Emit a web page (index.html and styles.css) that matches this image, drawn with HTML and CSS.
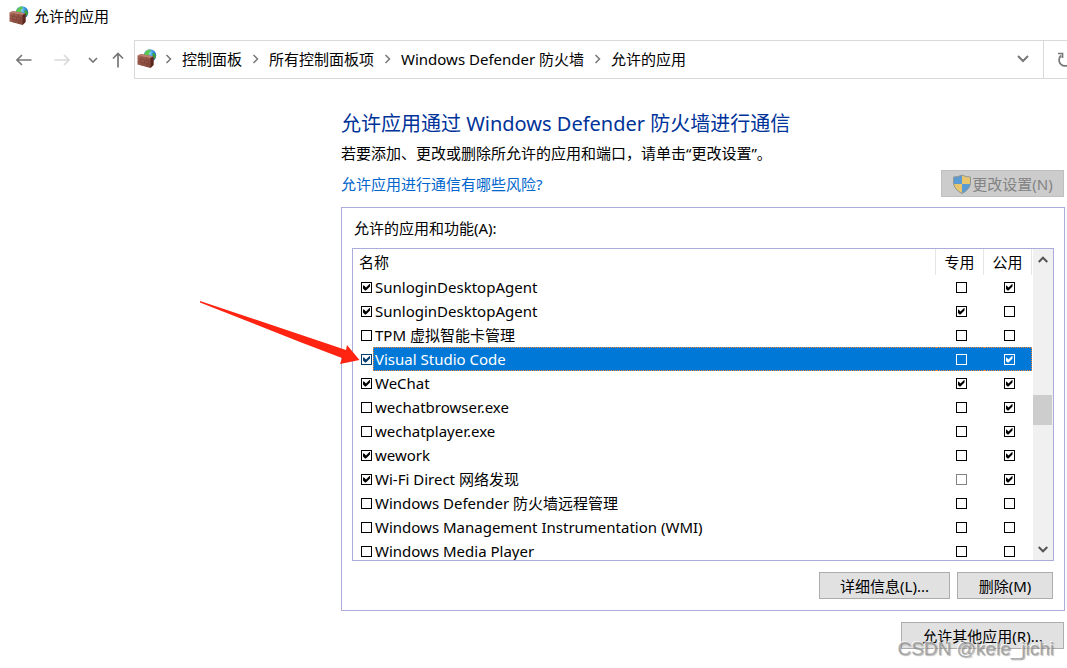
FILE: index.html
```html
<!DOCTYPE html>
<html lang="zh-CN">

<head>
    <meta charset="UTF-8">
    <meta name="viewport" content="width=device-width, initial-scale=1.0">
    <title>允许的应用</title>
    <link rel="stylesheet" href="styles.css">
</head>

<body>

    <svg class="defs" width="0" height="0" aria-hidden="true">
        <defs>
            <radialGradient id="globe" cx="0.4" cy="0.3" r="0.8">
                <stop offset="0" stop-color="#9fe0fa" />
                <stop offset="0.5" stop-color="#2b8be0" />
                <stop offset="1" stop-color="#123f9c" />
            </radialGradient>
            <linearGradient id="brick" x1="0" y1="0" x2="1" y2="1">
                <stop offset="0" stop-color="#a8695a" />
                <stop offset="1" stop-color="#7d4033" />
            </linearGradient>
        </defs>
        <symbol id="firewall" viewBox="0 0 20 20">
            <circle cx="13" cy="6.5" r="6.2" fill="url(#globe)" />
            <path d="M7.5 4 Q9.5 .8 13 .6 L14 2.2 L12 3.8 L12.5 6 L10 8 L7 7 Z" fill="#5cc850" />
            <path d="M15.5 4 L18 4.5 L19 7.5 L17 10.5 L15.5 8 Z" fill="#3da23f" />
            <path d="M0.5 6.5 L4 5 L16.5 7.5 L16.5 16 L13.5 19 L0.5 15.5 Z" fill="url(#brick)" />
            <path d="M0.5 6.5 L4 5 L16.5 7.5 L13.5 9 Z" fill="#bd8070" />
            <path d="M13.5 9 L16.5 7.5 L16.5 16 L13.5 19 Z" fill="#5b2820" />
            <path d="M1 9.5 L13.5 12.3 M1 12.5 L13.5 15.6 M5 7.4 V10.4 M9.5 8.2 V11.4 M3.5 10.1 V13.1 M7.5 11 V14.1 M11.5 11.9 V15.1 M5 13.5 V16.6 M9.5 14.6 V17.9" fill="none" stroke="#7b4034" stroke-width="0.6" />
        </symbol>
        <symbol id="crumb" viewBox="0 0 7 10">
            <path d="M1.5 1 L5.5 5 L1.5 9" fill="none" stroke="#777" stroke-width="1.5" />
        </symbol>
    </svg>

    <header class="titlebar">
        <svg class="app-icon" aria-hidden="true"><use href="#firewall" /></svg>
        <span>允许的应用</span>
    </header>

    <nav class="toolbar">
        <div class="toolbar__nav">
            <button type="button" aria-label="后退">
                <svg width="16" height="12" viewBox="0 0 16 12" fill="none" stroke="#777" stroke-width="1.6"><path d="M1 6 H15.5 M6 1 L1 6 L6 11" /></svg>
            </button>
            <button type="button" aria-label="前进" disabled>
                <svg width="16" height="12" viewBox="0 0 16 12" fill="none" stroke="#d9d9d9" stroke-width="1.6"><path d="M.5 6 H15 M10 1 L15 6 L10 11" /></svg>
            </button>
            <button type="button" class="history" aria-label="最近位置">
                <svg width="10" height="6" viewBox="0 0 10 6" fill="none" stroke="#777" stroke-width="1.7"><path d="M1 1 L5 5 L9 1" /></svg>
            </button>
            <button type="button" class="up" aria-label="上移">
                <svg width="12" height="16" viewBox="0 0 12 16" fill="none" stroke="#777" stroke-width="1.7"><path d="M6 1.5 V15.5 M1 6.5 L6 1.5 L11 6.5" /></svg>
            </button>
        </div>
        <div class="address">
            <svg class="app-icon" aria-hidden="true"><use href="#firewall" /></svg>
            <svg class="crumb" aria-hidden="true"><use href="#crumb" /></svg>
            <a href="#">控制面板</a>
            <svg class="crumb" aria-hidden="true"><use href="#crumb" /></svg>
            <a href="#">所有控制面板项</a>
            <svg class="crumb" aria-hidden="true"><use href="#crumb" /></svg>
            <a href="#">Windows Defender 防火墙</a>
            <svg class="crumb" aria-hidden="true"><use href="#crumb" /></svg>
            <a href="#">允许的应用</a>
            <button type="button" class="address__drop" aria-label="以前的位置">
                <svg width="12" height="8" viewBox="0 0 12 8" fill="none" stroke="#777" stroke-width="2"><path d="M1 1 L6 6 L11 1" /></svg>
            </button>
        </div>
        <button type="button" class="refresh" aria-label="刷新">
            <svg width="16" height="16" viewBox="0 0 16 16" fill="none" stroke="#777" stroke-width="1.7"><path d="M4 3.5 A6 6 0 1 0 11.5 3 M1 1.5 H5.5 V6" /></svg>
        </button>
    </nav>

    <main class="content">
        <h1>允许应用通过 Windows Defender 防火墙进行通信</h1>
        <p>若要添加、更改或删除所允许的应用和端口，请单击“更改设置”。</p>
        <div class="content__row">
            <a href="#" class="risk">允许应用进行通信有哪些风险?</a>
            <button type="button" class="btn btn--change" disabled>
                <svg width="20" height="20" viewBox="0 0 20 20" aria-hidden="true">
                    <path d="M10 1 Q6 3.2 1.5 3 V9 Q2 15.5 10 19.5 Z" fill="#5a9bd3" />
                    <path d="M10 1 Q14 3.2 18.5 3 V9 Q18 15.5 10 19.5 Z" fill="#e8c66e" />
                    <path d="M1.5 10 H10 V19.5 Q2.5 16 1.5 10 Z" fill="#e8c66e" />
                    <path d="M18.5 10 H10 V19.5 Q17.5 16 18.5 10 Z" fill="#5a9bd3" />
                    <path d="M10 1 Q6 3.2 1.5 3 V9 Q2 15.5 10 19.5 Q18 15.5 18.5 9 V3 Q14 3.2 10 1 Z" fill="none" stroke="#8f9799" stroke-width="1" />
                </svg>更改设置(N)
            </button>
        </div>

        <section class="group">
            <h2>允许的应用和功能(A):</h2>
            <div class="list">
                <table>
                    <thead>
                        <tr>
                            <th class="name">名称</th>
                            <th>专用</th>
                            <th>公用</th>
                        </tr>
                    </thead>
                    <tbody>
                        <tr>
                            <td class="name"><input type="checkbox" id="app1" checked><label for="app1">SunloginDesktopAgent</label></td>
                            <td><input type="checkbox" aria-label="专用"></td>
                            <td><input type="checkbox" aria-label="公用" checked></td>
                        </tr>
                        <tr>
                            <td class="name"><input type="checkbox" id="app2" checked><label for="app2">SunloginDesktopAgent</label></td>
                            <td><input type="checkbox" aria-label="专用" checked></td>
                            <td><input type="checkbox" aria-label="公用"></td>
                        </tr>
                        <tr>
                            <td class="name"><input type="checkbox" id="app3"><label for="app3">TPM 虚拟智能卡管理</label></td>
                            <td><input type="checkbox" aria-label="专用"></td>
                            <td><input type="checkbox" aria-label="公用"></td>
                        </tr>
                        <tr class="selected">
                            <td class="name"><input type="checkbox" id="app4" checked><label for="app4">Visual Studio Code</label></td>
                            <td><input type="checkbox" aria-label="专用"></td>
                            <td><input type="checkbox" aria-label="公用" checked></td>
                        </tr>
                        <tr>
                            <td class="name"><input type="checkbox" id="app5" checked><label for="app5">WeChat</label></td>
                            <td><input type="checkbox" aria-label="专用" checked></td>
                            <td><input type="checkbox" aria-label="公用" checked></td>
                        </tr>
                        <tr>
                            <td class="name"><input type="checkbox" id="app6"><label for="app6">wechatbrowser.exe</label></td>
                            <td><input type="checkbox" aria-label="专用"></td>
                            <td><input type="checkbox" aria-label="公用" checked></td>
                        </tr>
                        <tr>
                            <td class="name"><input type="checkbox" id="app7"><label for="app7">wechatplayer.exe</label></td>
                            <td><input type="checkbox" aria-label="专用"></td>
                            <td><input type="checkbox" aria-label="公用" checked></td>
                        </tr>
                        <tr>
                            <td class="name"><input type="checkbox" id="app8" checked><label for="app8">wework</label></td>
                            <td><input type="checkbox" aria-label="专用"></td>
                            <td><input type="checkbox" aria-label="公用" checked></td>
                        </tr>
                        <tr>
                            <td class="name"><input type="checkbox" id="app9" checked><label for="app9">Wi-Fi Direct 网络发现</label></td>
                            <td><input type="checkbox" aria-label="专用" disabled></td>
                            <td><input type="checkbox" aria-label="公用" checked></td>
                        </tr>
                        <tr>
                            <td class="name"><input type="checkbox" id="app10"><label for="app10">Windows Defender 防火墙远程管理</label></td>
                            <td><input type="checkbox" aria-label="专用"></td>
                            <td><input type="checkbox" aria-label="公用"></td>
                        </tr>
                        <tr>
                            <td class="name"><input type="checkbox" id="app11"><label for="app11">Windows Management Instrumentation (WMI)</label></td>
                            <td><input type="checkbox" aria-label="专用"></td>
                            <td><input type="checkbox" aria-label="公用"></td>
                        </tr>
                        <tr>
                            <td class="name"><input type="checkbox" id="app12"><label for="app12">Windows Media Player</label></td>
                            <td><input type="checkbox" aria-label="专用"></td>
                            <td><input type="checkbox" aria-label="公用"></td>
                        </tr>
                    </tbody>
                </table>
                <div class="scrollbar">
                    <button type="button" aria-label="向上滚动">
                        <svg width="10" height="7" viewBox="0 0 10 7" fill="none" stroke="#555" stroke-width="2"><path d="M.7 6 L5 1.7 L9.3 6" /></svg>
                    </button>
                    <div class="scrollbar__track">
                        <div class="scrollbar__thumb"></div>
                    </div>
                    <button type="button" aria-label="向下滚动">
                        <svg width="10" height="7" viewBox="0 0 10 7" fill="none" stroke="#555" stroke-width="2"><path d="M.7 1 L5 5.3 L9.3 1" /></svg>
                    </button>
                </div>
            </div>
            <div class="group__buttons">
                <button type="button" class="btn btn--details">详细信息(L)...</button>
                <button type="button" class="btn btn--remove">删除(M)</button>
            </div>
        </section>

        <div class="content__footer">
            <button type="button" class="btn btn--other">允许其他应用(R)...</button>
        </div>
    </main>

    <svg class="arrow" width="160" height="64" viewBox="0 0 160 64" aria-hidden="true">
        <path d="M0 0 L146 49 L147 44 L159.500 59 L140 63 L142 57 L100 41 L0 1.500 Z" fill="#ff2312" />
    </svg>
    <div class="watermark">CSDN @kele_jichi</div>

</body>

</html>
```

FILE: styles.css
```css
body {
    position: relative;
    margin: 0;
    min-height: 100vh;
    overflow: hidden;
    background-color: #fff;
    color: #000;
    font-family: 'Noto Sans', 'Noto Sans CJK SC', sans-serif;
    font-size: 15px;
    line-height: 20px;
}

button {
    padding: 0;
    border: 0;
    background: none;
    font: inherit;
    color: inherit;
}

svg {
    display: block;
    flex: none;
}

.defs {
    position: absolute;
}

.app-icon {
    width: 20px;
    height: 20px;
}

.titlebar {
    display: flex;
    align-items: center;
    gap: 5px;
    height: 32px;
    padding-left: 9px;
}

/* navigation + address bar */
.toolbar {
    display: flex;
    height: 39px;
    margin-top: 8px;
}

.toolbar__nav {
    display: flex;
    align-items: center;
    width: 118px;
    padding-left: 16px;
}

.toolbar__nav button {
    margin-right: 22px;
}

.toolbar__nav .history {
    margin-right: 14px;
    margin-left: -4px;
}

.toolbar__nav .up {
    margin-right: 0;
}

.address {
    display: flex;
    flex: 1;
    align-items: center;
    min-width: 0;
    box-sizing: border-box;
    padding: 0 14px 2px 2px;
    border: 1px solid #d9d9d9;
    white-space: nowrap;
}

.address a {
    color: #000;
    text-decoration: none;
}

.crumb {
    width: 7px;
    height: 10px;
    margin: 0 10px;
}

.app-icon + .crumb {
    margin-left: 8px;
}

.address__drop {
    margin-left: auto;
}

.refresh {
    width: 23px;
    padding-left: 13px;
    border: solid #d9d9d9;
    border-width: 1px 0;
    overflow: hidden;
}

/* page */
.content {
    padding: 32px 2px 0 341px;
}

h1 {
    margin: 0;
    color: #003399;
    font-size: 20px;
    font-weight: 400;
    line-height: 26px;
}

p {
    margin: 6px 0 7px;
}

.content__row {
    display: flex;
    justify-content: space-between;
    align-items: center;
    height: 27px;
    margin-bottom: 10px;
    padding-right: 1px;
}

.risk {
    color: #0066cc;
    text-decoration: none;
}

.btn {
    display: flex;
    justify-content: center;
    align-items: center;
    box-sizing: border-box;
    height: 27px;
    border: 1px solid #adadad;
    background-color: #e1e1e1;
}

.btn--change {
    width: 123px;
    border-color: #bfbfbf;
    background-color: #ccc;
    color: #838383;
}

.btn--details {
    width: 131px;
}

.btn--remove {
    width: 96px;
}

.btn--other {
    width: 163px;
}

.group {
    padding: 10px;
    border: 1px solid #acacdc;
}

.group h2 {
    margin: 0 2px 10px;
    font-size: 15px;
    font-weight: 400;
}

.list {
    display: flex;
    gap: 1px;
    height: 311px;
    border: 1px solid #acacdc;
    overflow: hidden;
}

table {
    flex: 1;
    border-spacing: 0;
    table-layout: fixed;
}

th,
td {
    box-sizing: border-box;
    width: 48px;
    height: 24px;
    padding: 0;
    text-align: center;
}

th {
    height: 26px;
    border-right: 1px solid #e5e5e5;
    font-weight: 400;
}

td:not(.name) {
    padding-left: 2px;
}

.name {
    width: auto;
    text-align: left;
}

th.name {
    padding-left: 6px;
}

td.name {
    display: flex;
    align-items: center;
    padding-left: 8px;
}

td.name label {
    flex: 1;
    padding-left: 2px;
    margin-left: 1px;
    line-height: 24px;
}

input[type="checkbox"] {
    appearance: none;
    display: block;
    box-sizing: border-box;
    width: 11px;
    height: 11px;
    margin: 0 auto;
    padding: 1px;
    border: 1px solid currentColor;
    color: #000;
}

td.name input {
    margin: 0;
}

input[type="checkbox"]:checked::before {
    content: '';
    display: block;
    width: 7px;
    height: 7px;
    background-color: currentColor;
    clip-path: polygon(0 2px, 1px 2px, 3px 4px, 7px 0, 7px 3px, 3px 7px, 2px 7px, 0 5px);
}

input[type="checkbox"]:disabled {
    color: #838383;
}

.selected td:not(.name),
.selected label {
    border: dotted #f08733;
    border-width: 1px 0;
    background-color: #0078d7;
    color: #fff;
}

.selected td.name + td + td {
    padding-left: 3px;
    border-right-width: 1px;
}

.selected .name label {
    padding-left: 1px;
    border-left-width: 1px;
    line-height: 22px;
}

.selected td:not(.name) input {
    color: #fff;
}

.selected .name input {
    color: #003c6c;
}

.scrollbar {
    display: flex;
    flex-direction: column;
    width: 20px;
    background-color: #f0f0f0;
}

.scrollbar button {
    display: flex;
    justify-content: center;
    align-items: center;
    height: 21px;
    padding-right: 1px;
}

.scrollbar__track {
    display: grid;
    flex: 1;
    grid-template-rows: 125fr 30px 114fr;
}

.scrollbar__thumb {
    grid-row: 2;
    margin-right: 1px;
    background-color: #cdcdcd;
}

.group__buttons {
    display: flex;
    justify-content: flex-end;
    gap: 7px;
    margin-top: 11px;
    padding: 0 1px 1px 0;
}

.content__footer {
    display: flex;
    justify-content: flex-end;
    margin-top: 11px;
    padding-right: 1px;
}

/* annotation over the window */
.arrow {
    position: absolute;
    top: 301px;
    left: 200px;
}

.watermark {
    position: absolute;
    right: 13px;
    bottom: 9px;
    color: rgba(150, 150, 150, 0.75);
    font-family: 'Liberation Sans', sans-serif;
    font-size: 19px;
    text-shadow: 1px 1px 1px rgba(110, 110, 110, 0.5), -1px -1px 0 rgba(255, 255, 255, 0.7);
}
```
